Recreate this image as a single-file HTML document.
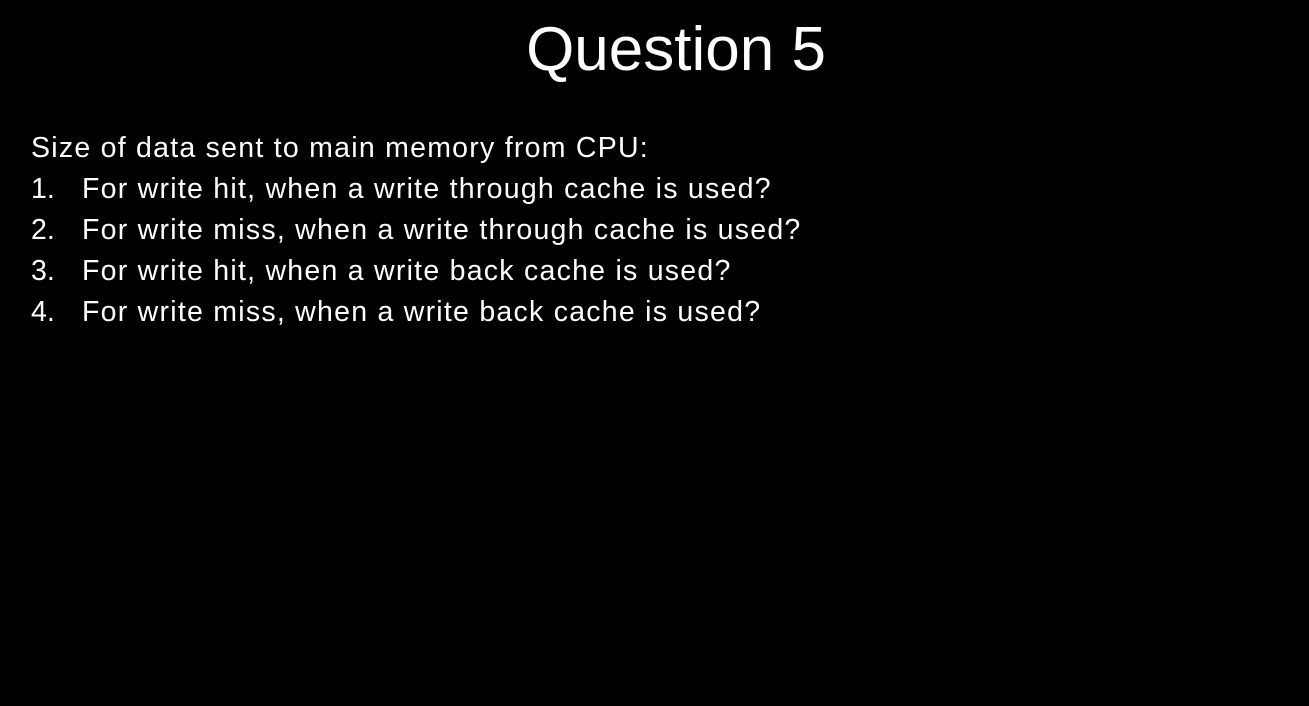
<!DOCTYPE html>
<html><head><style>
html,body{margin:0;padding:0;background:#000;width:1309px;height:706px;overflow:hidden}
.t{position:absolute;left:0;width:1352px;text-align:center;top:14px;font:62px "Liberation Sans",sans-serif;color:#fff;line-height:72px}
.b{position:absolute;left:31px;top:128px;font:28.5px "Liberation Sans",sans-serif;color:#fff;line-height:41px;letter-spacing:1.25px}
.b div{white-space:nowrap}
.n{display:inline-block;width:51px;letter-spacing:0}
</style></head><body>
<div class="t">Question 5</div>
<div class="b">
<div>Size of data sent to main memory from CPU:</div>
<div><span class="n">1.</span>For write hit, when a write through cache is used?</div>
<div><span class="n">2.</span>For write miss, when a write through cache is used?</div>
<div><span class="n">3.</span>For write hit, when a write back cache is used?</div>
<div><span class="n">4.</span>For write miss, when a write back cache is used?</div>
</div>
</body></html>
